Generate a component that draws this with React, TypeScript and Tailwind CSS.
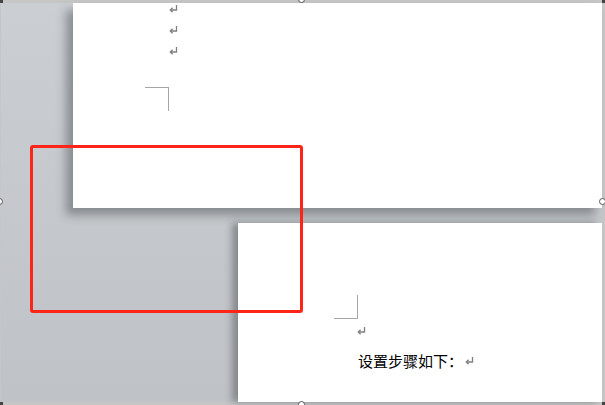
import React from "react";

function Ret({ className = "" }: { className?: string }) {
  return (
    <svg width="9" height="8" viewBox="0 0 9 8" className={className}>
      <path d="M7.5 0 V5 H1.5" fill="none" stroke="#7f7f7f" strokeWidth="1.3" />
      <path d="M3.6 2.8 L1.3 5 L3.6 7.2" fill="none" stroke="#7f7f7f" strokeWidth="1.3" />
    </svg>
  );
}

function Handle({ className }: { className: string }) {
  return (
    <div
      className={`absolute w-[7px] h-[7px] rounded-full bg-white border border-[#555] ${className}`}
    />
  );
}

function Corner({ className }: { className: string }) {
  return <div className={`absolute w-[3px] h-[3px] bg-[#444] ${className}`} />;
}

export default function App() {
  return (
    <div className="relative w-[605px] h-[405px] overflow-hidden bg-[#c6c6c6] font-['Noto_Sans_CJK_SC',sans-serif]">
      <div className="absolute left-[1px] top-[3px] right-[3px] bottom-[3px] flex flex-col bg-gradient-to-b from-[#cbced2] to-[#bfc2c6]">
        <div className="ml-[72px] h-[205px] bg-white shadow-[-7px_7px_9px_rgba(60,66,72,0.45)] flex flex-col">
          <div className="pl-[96px] pt-[2px] flex flex-col">
            <div className="h-[21px]"><Ret /></div>
            <div className="h-[21px]"><Ret /></div>
            <div className="h-[21px]"><Ret /></div>
          </div>
          <div className="ml-[72px] mt-[19px] w-[24px] h-[24px] border-t border-r border-[#a6a6a6]" />
        </div>
        <div className="mt-[15px] ml-[237px] flex-1 bg-white shadow-[-6px_0px_7px_rgba(60,66,72,0.45)] flex flex-col">
          <div className="ml-[96px] mt-[72px] w-[24px] h-[24px] border-b border-r border-[#a6a6a6]" />
          <div className="ml-[119px] mt-[8px] h-[10px]"><Ret /></div>
          <div className="ml-[120px] mt-[14px] flex items-center text-[15px] leading-[20px] text-black">
            <span>设置步骤如下：</span>
            <Ret className="ml-[2px]" />
          </div>
        </div>
      </div>
      <div className="absolute left-[30px] top-[145px] w-[273px] h-[168px] border-[3px] border-[#ff2418] rounded-[3px]" />
      <Handle className="left-[-4px] top-[198px]" />
      <Handle className="left-[599px] top-[198px]" />
      <Handle className="left-[298px] top-[-4px]" />
      <Handle className="left-[298px] top-[401px]" />
      <Corner className="left-0 top-0" />
      <Corner className="right-0 top-0" />
      <Corner className="left-0 bottom-0" />
      <Corner className="right-0 bottom-0" />
    </div>
  );
}
